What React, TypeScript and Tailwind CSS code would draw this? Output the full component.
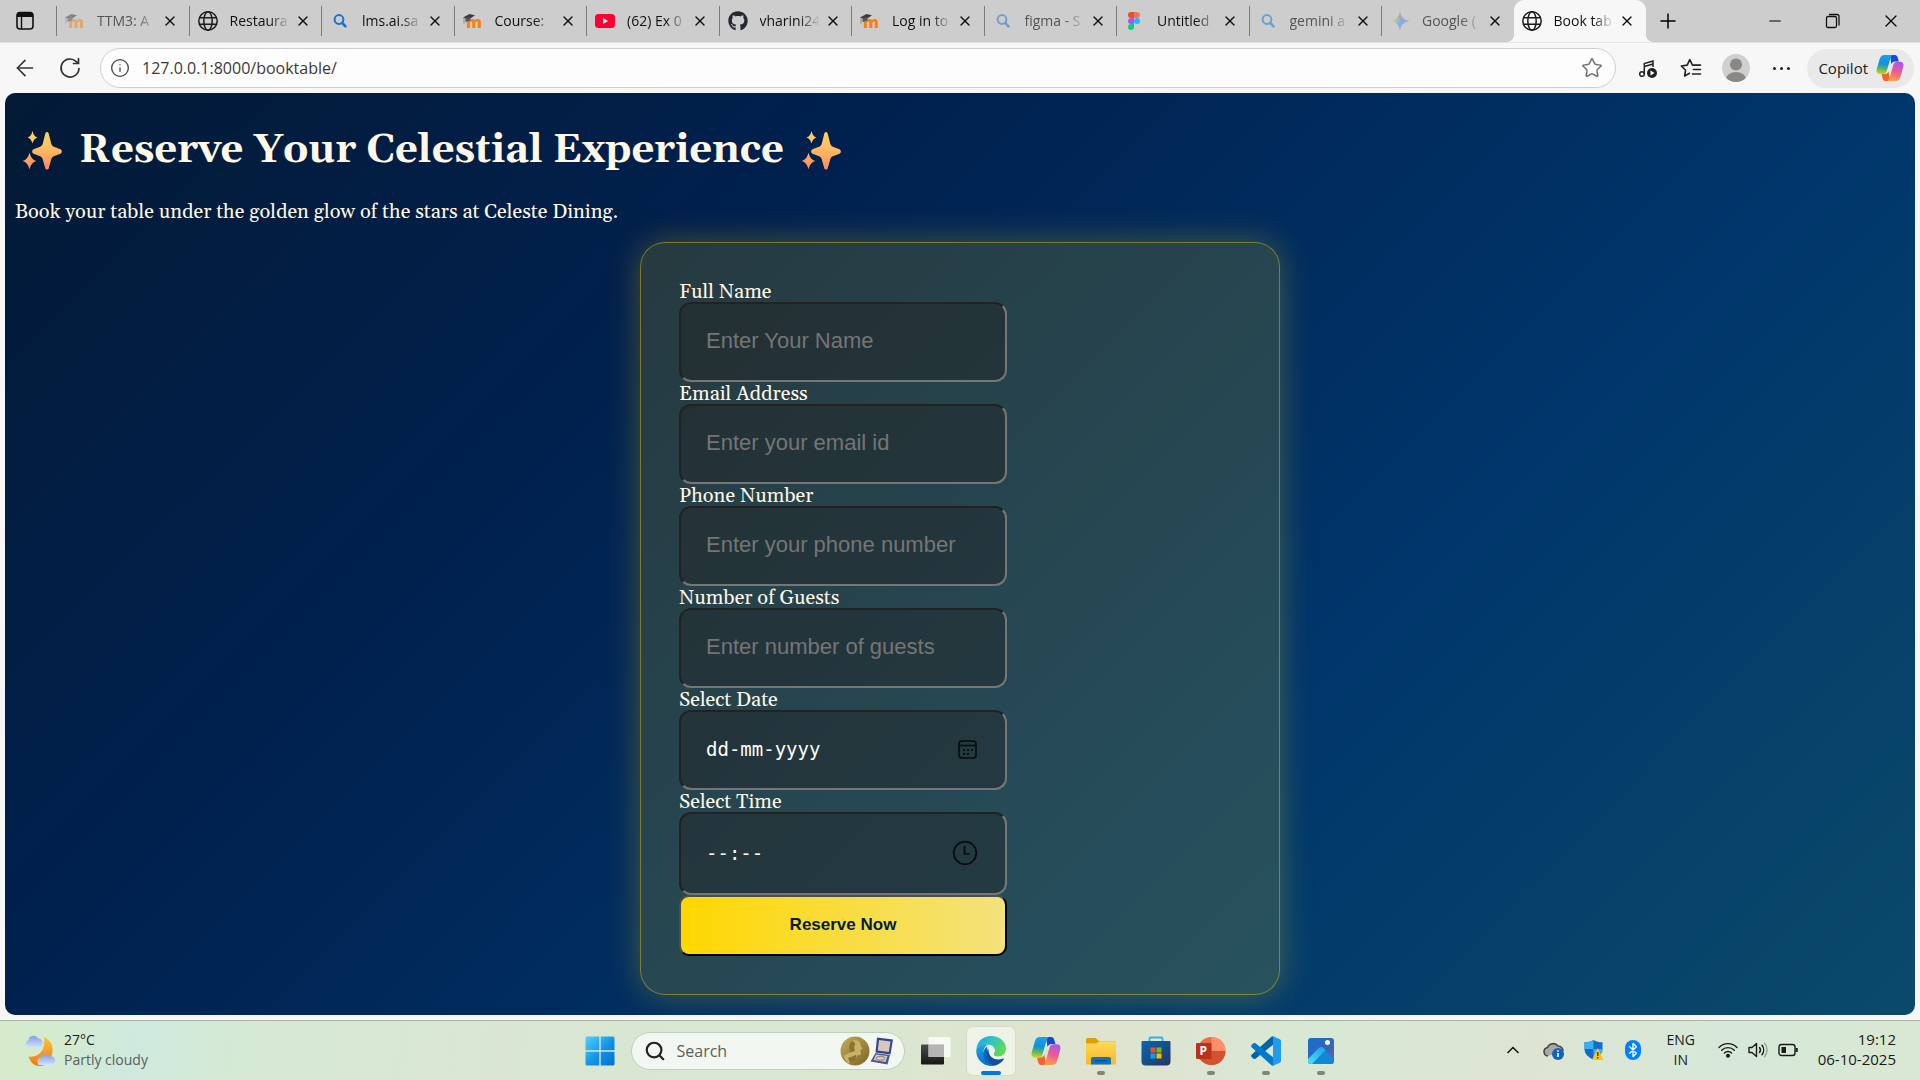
import React from "react";
import { ArrowLeft, Info, Star, X, Minus, Plus, Search, ChevronUp, Bluetooth } from "lucide-react";
import { FaGithub } from "react-icons/fa";

type IconProps = { className?: string };

const TabActions = () => (
  <svg viewBox="0 0 20 20" className="size-5">
    <rect x="2" y="1.5" width="16" height="16.5" rx="3" fill="none" stroke="#111" strokeWidth="1.6" />
    <path d="M2 6V4.5a3 3 0 0 1 3-3h10a3 3 0 0 1 3 3V6z" fill="#111" />
    <path d="M6.5 6v12" stroke="#111" strokeWidth="1.4" />
  </svg>
);

const Globe = ({ className }: IconProps) => (
  <svg viewBox="0 0 20 20" className={className} fill="none" stroke="#1b1b1b" strokeWidth="1.5">
    <circle cx="10" cy="10" r="9.2" />
    <ellipse cx="10" cy="10" rx="4.2" ry="9.2" />
    <path d="M1.6 6.8h16.8M1.6 13.2h16.8" />
  </svg>
);

const Moodle = ({ className }: IconProps) => (
  <svg viewBox="0 0 20 20" className={className}>
    <text x="3" y="16.500" fontFamily="Open Sans, sans-serif" fontWeight="800" fontSize="16" fill="#f98012">m</text>
    <path d="M0 6.4 6.5 3 12 4.2 6 8.5z" fill="#3c3c3c" />
    <path d="M2.5 7v4l5-1.6V6z" fill="#555" />
    <path d="M1 6.6v6" stroke="#777" strokeWidth=".8" />
  </svg>
);

const BlueSearch = ({ className }: IconProps) => (
  <svg viewBox="0 0 20 20" className={className} fill="none" stroke="#1573d1" strokeLinecap="round">
    <circle cx="9" cy="8.5" r="4.4" strokeWidth="2" />
    <path d="m12.3 12 3.2 3.4" strokeWidth="2.6" />
  </svg>
);

const YouTube = ({ className }: IconProps) => (
  <svg viewBox="0 0 20 20" className={className}>
    <rect x="0" y="3" width="20" height="14" rx="3.5" fill="#ff0033" />
    <path d="m8 7 5 3-5 3z" fill="#fff" />
  </svg>
);

const Figma = ({ className }: IconProps) => (
  <svg viewBox="0 0 20 20" className={className}>
    <path d="M9 1H6a3 3 0 0 0 0 6h3z" fill="#f24e1e" />
    <path d="M9 1h3a3 3 0 0 1 0 6H9z" fill="#ff7262" />
    <path d="M9 7H6a3 3 0 0 0 0 6h3z" fill="#a259ff" />
    <circle cx="12" cy="10" r="3" fill="#1abcfe" />
    <path d="M9 13H6a3 3 0 1 0 3 3z" fill="#0acf83" />
  </svg>
);

const Gemini = ({ className }: IconProps) => (
  <svg viewBox="0 0 20 20" className={className}>
    <defs>
      <linearGradient id="gem" x1="0" y1=".2" x2="1" y2=".6">
        <stop offset="0" stopColor="#f6c445" />
        <stop offset=".35" stopColor="#8fbf9a" />
        <stop offset=".55" stopColor="#4f8df5" />
        <stop offset="1" stopColor="#4080f0" />
      </linearGradient>
      <linearGradient id="gemTop" x1="0" y1="0" x2="0" y2="1">
        <stop offset="0" stopColor="#ea4335" />
        <stop offset=".45" stopColor="#ea4335" stopOpacity="0" />
        <stop offset=".7" stopColor="#34a853" stopOpacity="0" />
        <stop offset="1" stopColor="#34a853" />
      </linearGradient>
    </defs>
    <path d="M10 .5c.8 5.4 4 8.700 9.500 9.500-5.500.8-8.700 4-9.500 9.500C9.200 14 6 10.800.5 10 6 9.200 9.200 5.900 10 .5z" fill="url(#gem)" />
    <path d="M10 .5c.8 5.4 4 8.700 9.500 9.500-5.500.8-8.700 4-9.500 9.500C9.200 14 6 10.800.5 10 6 9.200 9.200 5.900 10 .5z" fill="url(#gemTop)" />
  </svg>
);

const GitHub = ({ className }: IconProps) => <FaGithub className={className} color="#24292f" />;

const Copilot = ({ id, className }: { id: string; className?: string }) => (
  <svg viewBox="0 0 30 30" className={className}>
    <defs>
      <linearGradient id={`${id}a`} x1=".3" y1="0" x2=".2" y2="1">
        <stop offset="0" stopColor="#1a9fee" />
        <stop offset=".45" stopColor="#1390d8" />
        <stop offset=".7" stopColor="#4fb86a" />
        <stop offset="1" stopColor="#f0d00c" />
      </linearGradient>
      <linearGradient id={`${id}b`} x1=".7" y1="0" x2=".4" y2="1">
        <stop offset="0" stopColor="#a856ec" />
        <stop offset=".5" stopColor="#ee5a92" />
        <stop offset="1" stopColor="#fba04a" />
      </linearGradient>
    </defs>
    <path d="M15 1h5c2 0 2.700 1.200 3.200 2.800L24.500 8h-4c-2 0-3.300 1-4 3z" fill="#1b48cf" />
    <path d="M15 29h-5c-1.600 0-2.300-1.200-2.800-2.800L6 21.500h3c2.600 0 3.700-1 4.400-3z" fill="#f5622e" />
    <path d="M9 1h9c-1.500.6-2 2-2.600 4l-4 13.500c-.7 2.200-2 3.200-4.400 3.200H4.500C1 21.700-.1 19 .8 16L4 5c.8-2.600 2.400-4 5-4z" fill={`url(#${id}a)`} />
    <path d="M21 29h-9c1.500-.6 2-2 2.600-4l4-13.500c.7-2.200 2-3.200 4.400-3.200h2.500c3.500 0 4.600 2.700 3.700 5.700L26 25c-.8 2.600-2.400 4-5 4z" fill={`url(#${id}b)`} />
  </svg>
);

const Sparkles = () => (
  <svg viewBox="0 0 40 42" className="h-[42px] w-10 shrink-0" role="img" aria-label="sparkles">
    <defs>
      <linearGradient id="spark" gradientUnits="userSpaceOnUse" x1="0" y1="0" x2="0" y2="42">
        <stop offset="0" stopColor="#ffd45e" />
        <stop offset=".4" stopColor="#ffc061" />
        <stop offset="1" stopColor="#ff8266" />
      </linearGradient>
    </defs>
    <g fill="url(#spark)">
      <path d="M25 2c1 0 1.500.8 1.800 2l2.400 9.500c.5 2 1.500 3 3.300 3.600l6 2.200c1.800.8 1.800 3.600 0 4.400l-6 2.200c-1.800.6-2.800 1.600-3.300 3.600L26.800 38c-.5 2-3.100 2-3.600 0l-2.400-8.500c-.5-2-1.500-3-3.300-3.600l-6-2.200c-1.800-.8-1.800-3.600 0-4.400l6-2.200c1.800-.6 2.800-1.600 3.300-3.600L23.200 4c.3-1.200.8-2 1.800-2z" />
      <path d="M10.500 1c.7 2.800 1.700 5.400 5 6.500-3.300 1.100-4.300 3.700-5 6-.7-2.300-1.700-4.900-5-6 3.300-1.100 4.300-3.700 5-6.500z" />
      <path d="M7.500 22.500c1 4 2.500 7.200 7 8.500-4.500 1.300-6 4.500-7 8.500-1-4-2.500-7.200-7-8.500 4.500-1.300 6-4.500 7-8.500z" />
    </g>
  </svg>
);

const tabs = [
  { title: "TTM3: A", Icon: Moodle, faded: true },
  { title: "Restaura", Icon: Globe },
  { title: "lms.ai.sa", Icon: BlueSearch },
  { title: "Course:", Icon: Moodle },
  { title: "(62) Ex 0", Icon: YouTube },
  { title: "vharini24", Icon: GitHub },
  { title: "Log in to", Icon: Moodle },
  { title: "figma - S", Icon: BlueSearch, faded: true },
  { title: "Untitled", Icon: Figma },
  { title: "gemini a", Icon: BlueSearch, faded: true },
  { title: "Google (", Icon: Gemini, faded: true },
  { title: "Book tab", Icon: Globe, active: true },
];

function TabStrip() {
  return (
    <header className="flex h-[42px] items-center bg-[#cdcdcd]">
      <button aria-label="Tab actions" className="flex w-14 shrink-0 justify-center pr-1.5">
        <TabActions />
      </button>
      <nav className="grid h-full flex-1 grid-cols-12">
        {tabs.map(({ title, Icon, faded, active }, i) => (
          <div
            key={i}
            className={
              active
                ? "relative flex h-full min-w-0 items-center rounded-t-[10px] bg-[#f7f7f7] pl-2"
                : "flex h-full min-w-0 items-center"
            }
          >
            {active ? (
              <>
                <span className="absolute -left-2 bottom-0 size-2 bg-[radial-gradient(circle_at_0_0,transparent_8px,#f7f7f7_8px)]" />
                <span className="absolute -right-2 bottom-0 size-2 bg-[radial-gradient(circle_at_100%_0,transparent_8px,#f7f7f7_8px)]" />
              </>
            ) : (
              <span className="mr-2 h-[30px] w-px shrink-0 bg-[#7b7b7b]" />
            )}
            <Icon className={faded ? "size-5 shrink-0 opacity-50" : "size-5 shrink-0"} />
            <span
              className={
                (faded ? "text-[#555]" : "text-[#111]") +
                " ml-3 w-[60px] whitespace-nowrap pb-0.5 text-[14px] [mask-image:linear-gradient(to_right,#000_65%,transparent)]"
              }
            >
              {title}
            </span>
            <button aria-label={`Close ${title}`} className="ml-[5px] flex size-4 items-center justify-center">
              <X className="size-4 shrink-0 text-[#111]" strokeWidth={2} />
            </button>
          </div>
        ))}
      </nav>
      <div className="flex w-[274px] shrink-0 items-center">
        <button aria-label="New tab" className="ml-2.5"><Plus className="size-6" strokeWidth={1.5} /></button>
        <button aria-label="Minimize" className="ml-[86px]"><Minus className="size-[18px]" strokeWidth={1.5} /></button>
        <button aria-label="Restore" className="ml-10">
          <svg viewBox="0 0 18 18" className="size-[18px]" fill="none" stroke="#111" strokeWidth="1.300">
            <rect x="2.500" y="4.500" width="10" height="11" rx="1.500" />
            <path d="M5 2.500h8a2 2 0 0 1 2 2v9" />
          </svg>
        </button>
        <button aria-label="Close window" className="ml-[39px]"><X className="size-5" strokeWidth={1.5} /></button>
      </div>
    </header>
  );
}

function Toolbar() {
  return (
    <div className="flex h-[51px] items-center border-t border-[#e4e4e4] bg-[#f7f7f7]">
      <button aria-label="Back" className="ml-3"><ArrowLeft className="size-[26px] text-[#333]" strokeWidth={1.5} /></button>
      <button aria-label="Refresh" className="ml-5">
        <svg viewBox="0 0 24 24" className="size-6" fill="none" stroke="#333" strokeWidth="1.700" strokeLinecap="round">
          <path d="M21 12.500a9 9 0 1 1-3-7.200L20 7" />
          <path d="M20.500 2.500v5h-5" />
        </svg>
      </button>
      <label className="ml-[18px] flex h-10 flex-1 items-center rounded-full border border-[#cfcfcf] bg-[#fdfdfd] pl-[9px] pr-3">
        <Info className="size-5 text-[#444]" strokeWidth={1.6} />
        <input
          aria-label="Address"
          defaultValue="127.0.0.1:8000/booktable/"
          className="ml-3 min-w-0 flex-1 bg-transparent text-[16px] text-[#3a3a3a] outline-none"
        />
        <Star className="size-[22px] text-[#707070]" strokeWidth={1.6} />
      </label>
      <button aria-label="Media" className="ml-[19px]">
        <svg viewBox="0 0 24 24" className="size-6" fill="none" stroke="#222" strokeWidth="1.500">
          <circle cx="7" cy="18" r="2.300" />
          <path d="M9.300 18V7.500L18 5v6M9.300 10.500 18 8" />
          <circle cx="17" cy="17" r="5" fill="#222" stroke="none" />
          <path d="m15.500 14.500 4 2.500-4 2.500z" fill="#fff" stroke="none" />
        </svg>
      </button>
      <button aria-label="Favorites" className="ml-5">
        <svg viewBox="0 0 24 24" className="size-6" fill="none" stroke="#222" strokeWidth="1.600" strokeLinejoin="round" strokeLinecap="round">
          <path d="M10.500 17.300 5.600 20l1-5.800L2.300 10l5.900-.9L10.800 3.600l2.700 5.500h8" />
          <path d="M14.500 13.500h7M13.500 18h8" />
        </svg>
      </button>
      <button aria-label="Profile" className="ml-[19px]">
        <svg viewBox="0 0 28 28" className="size-7">
          <clipPath id="avatar"><circle cx="14" cy="14" r="14" /></clipPath>
          <g clipPath="url(#avatar)">
            <rect width="28" height="28" fill="#d2d0ce" />
            <circle cx="14" cy="10.500" r="6" fill="#8a8886" />
            <ellipse cx="14" cy="25" rx="10" ry="7" fill="#8a8886" />
          </g>
        </svg>
      </button>
      <button aria-label="Settings and more" className="ml-[19px] flex w-6 justify-center gap-1">
        <span className="size-[3px] rounded-full bg-[#222]" />
        <span className="size-[3px] rounded-full bg-[#222]" />
        <span className="size-[3px] rounded-full bg-[#222]" />
      </button>
      <button className="ml-3.5 mr-1.5 flex h-[39px] items-center gap-2 rounded-full bg-[#e9e9e9] pl-[11px] pr-2.5 text-[15px] text-[#222]">
        Copilot
        <Copilot id="cpTop" className="size-7" />
      </button>
    </div>
  );
}

const fields = [
  { id: "name", label: "Full Name", placeholder: "Enter Your Name" },
  { id: "email", label: "Email Address", placeholder: "Enter your email id" },
  { id: "phone", label: "Phone Number", placeholder: "Enter your phone number" },
  { id: "guests", label: "Number of Guests", placeholder: "Enter number of guests" },
];

const boxClass =
  "block w-full rounded-xl border-2 border-t-[#222] border-l-[#222] border-r-[#767676] border-b-[#767676] bg-[rgba(32,32,32,0.4)] px-[25px] pb-0.5 outline-none";
const labelClass = "block h-[22px] text-[20px] leading-6";

function BookingPage() {
  return (
    <main className="mx-[5px] mb-[5px] flex flex-1 flex-col overflow-hidden rounded-[10px] bg-[linear-gradient(135deg,#041a36,#00204d_30%,#00366c_67%,#0b4a69)] px-2.5 font-[Gelasio,Georgia,'DejaVu_Serif',serif] text-[#fff8e7]">
      <h1 className="mt-[30px] flex h-14 items-center gap-[17px] pl-[7px] text-[40px] font-bold">
        <Sparkles />
        Reserve Your Celestial Experience
        <Sparkles />
      </h1>
      <p className="mt-5 h-6 text-[20px] leading-[26px]">Book your table under the golden glow of the stars at Celeste Dining.</p>
      <form
        onSubmit={(e) => e.preventDefault()}
        className="mx-auto mt-[19px] w-[640px] rounded-[25px] border border-[rgba(255,215,0,0.4)] bg-[rgba(255,215,0,0.15)] px-[38px] pb-[38px] pt-[37px] shadow-[0_0_32px_rgba(255,215,0,0.28)]"
      >
        <div className="w-[328px]">
          {fields.map((f) => (
            <React.Fragment key={f.id}>
              <label htmlFor={f.id} className={labelClass}>{f.label}</label>
              <input
                id={f.id}
                placeholder={f.placeholder}
                className={boxClass + " h-20 font-['Liberation_Sans',sans-serif] text-[22px] placeholder:text-[#757575]"}
              />
            </React.Fragment>
          ))}
          <label htmlFor="date" className={labelClass}>Select Date</label>
          <div className="relative">
            <input
              id="date"
              placeholder="dd-mm-yyyy"
              className={boxClass + " h-20 font-['DejaVu_Sans_Mono',monospace] text-[19px] placeholder:text-white"}
            />
            <button type="button" aria-label="Choose date" className="absolute right-[29px] top-[30px]">
              <svg viewBox="0 0 20 20" className="size-5" fill="none" stroke="#0a0a0a" strokeWidth="1.600">
                <rect x="1" y="1" width="17" height="17" rx="3" />
                <path d="M1 5.500h17" />
                <path d="M5 10h2M9 10h2M13 10h2M5 14h2M9 14h2" strokeWidth="2" />
              </svg>
            </button>
          </div>
          <label htmlFor="time" className={labelClass}>Select Time</label>
          <div className="relative">
            <input
              id="time"
              placeholder="--:--"
              className={boxClass + " h-[83px] font-['DejaVu_Sans_Mono',monospace] text-[19px] placeholder:text-white"}
            />
            <button type="button" aria-label="Choose time" className="absolute right-[29px] top-7">
              <svg viewBox="0 0 26 26" className="size-[26px]" fill="none" stroke="#0a0a0a" strokeWidth="1.700">
                <circle cx="13" cy="13" r="11.300" />
                <path d="M12.500 6v8h5" />
              </svg>
            </button>
          </div>
          <button
            type="submit"
            className="block h-[61px] w-full rounded-[10px] border-2 border-b-black border-l-[#4d4d4d] border-r-black border-t-[#4d4d4d] bg-[linear-gradient(90deg,#ffd700,#f3e27d)] pb-0.5 font-['Liberation_Sans',sans-serif] text-[17px] font-bold text-[#001f3f]"
          >
            Reserve Now
          </button>
        </div>
      </form>
    </main>
  );
}

const TaskTile = ({ label, children, mark }: { label: string; children: React.ReactNode; mark?: "active" | "open" }) => (
  <button
    aria-label={label}
    className={
      mark === "active"
        ? "flex size-12 flex-col items-center rounded-md bg-white/50 pt-[9px] shadow-[0_0_1px_1px_rgba(0,0,0,0.04)]"
        : "flex size-12 flex-col items-center pt-[9px]"
    }
  >
    {children}
    {mark === "active" && <span className="mt-[5px] h-1 w-5 rounded-full bg-[#0078d4]" />}
    {mark === "open" && <span className="mt-[5px] h-1 w-2 rounded-full bg-[#7f8579]" />}
  </button>
);

const icon30 = "size-[30px] shrink-0";

function TaskBar() {
  return (
    <footer className="grid h-[60px] grid-cols-[1fr_auto_1fr] items-center border-t border-[#a9b3a4] bg-[linear-gradient(100deg,#d6ebcb_0%,#d5ebcf_3%,#ceeadf_7%,#d5e9d3_13%,#dae6d2_26%,#d8e8d2_40%,#dfe3cf_57%,#d8e8d4_68%,#dde5d2_80%,#d6e8da_90%,#d9e8d2_100%)] text-[#1a1a1a]">
      <div className="flex items-center gap-2 pb-0.5 pl-6">
        <svg viewBox="0 0 32 34" className="h-[34px] w-8">
          <defs>
            <linearGradient id="moon" x1="0" y1="0" x2="0" y2="1"><stop offset="0" stopColor="#f8c23c" /><stop offset="1" stopColor="#f07a18" /></linearGradient>
            <linearGradient id="cloud" x1="0" y1="0" x2="0" y2="1"><stop offset="0" stopColor="#7f9fe6" /><stop offset="1" stopColor="#d5e2fb" /></linearGradient>
          </defs>
          <path d="M20 4c6 3 9.500 8 8.500 15-.9 8-6 14-12.500 14-5.500 0-9.500-3-11.500-9.500C15 25 22 17 20 4z" fill="url(#moon)" />
          <path d="M4.500 14.500a4 4 0 0 1 0-7.500 5.200 5.200 0 0 1 9.500-1.800 4.800 4.800 0 0 1 1.500 9.300z" fill="url(#cloud)" />
          <path d="M17 32a3.600 3.600 0 0 1 0-7.200 4.600 4.600 0 0 1 8.500-1.300A4.300 4.300 0 0 1 28 32z" fill="url(#cloud)" />
        </svg>
        <div className="text-[14px] leading-5">
          <p>27°C</p>
          <p className="text-[#59605a]">Partly cloudy</p>
        </div>
      </div>

      <div className="flex items-center gap-[7px]">
        <TaskTile label="Start">
          <svg viewBox="0 0 30 30" className={icon30}>
            <defs><linearGradient id="win" x1="0" y1="0" x2="1" y2="1"><stop offset="0" stopColor="#4fd2ff" /><stop offset=".55" stopColor="#1292e4" /><stop offset="1" stopColor="#0072d0" /></linearGradient></defs>
            <path d="M2 .5h12.300v13.800H.500V2A1.500 1.500 0 0 1 2 .5zM15.700.5H28A1.500 1.500 0 0 1 29.500 2v12.300H15.700zM.500 15.700h13.800v13.800H2A1.500 1.500 0 0 1 .500 28zM15.700 15.700h13.800V28a1.500 1.500 0 0 1-1.500 1.500H15.700z" fill="url(#win)" />
          </svg>
        </TaskTile>
        <label className="flex h-[38px] w-[274px] items-center rounded-full border border-[#c3cfbe] bg-[#f3f7f1] pl-3 pr-2.5">
          <Search className="size-[22px] text-[#222]" strokeWidth={2.4} />
          <input aria-label="Search" placeholder="Search" className="ml-[11px] w-0 flex-1 bg-transparent text-[16px] outline-none placeholder:text-[#5a5f5a]" />
          <svg viewBox="0 0 54 30" className="h-[30px] w-[54px]">
            <defs><linearGradient id="medal" x1="0" y1="0" x2="1" y2="1"><stop offset="0" stopColor="#c4ab5c" /><stop offset="1" stopColor="#7c6426" /></linearGradient></defs>
            <circle cx="15" cy="15" r="14.500" fill="url(#medal)" />
            <path d="M12 5c5-2 8 0 8.500 4l2 4-2 1 .3 4c-1 2-3 1-4 1.500L17 24l-9 3.500c-2-2-4-5-4-8l6-3c-1-4-1.500-9 2-11.500z" fill="#c9b268" />
            <path d="M12 5c3 1 4 3 2 6l1 4-5 1.500C8.500 12 9 7 12 5zM8 22l8-3 1 5-7 3z" fill="#8b7330" />
            <path d="m37 1.500 16 2-2.500 15-15-2z" fill="#35458a" />
            <path d="m39 4 11.500 1.500-1.700 10.500-11-1.500z" fill="#d9c8bd" />
            <path d="m35.500 17 14.500 2-2.500 9.500-17-3z" fill="#4a5797" />
            <path d="m36 18.500 11.500 1.500-2 6-12-2z" fill="#d6c9c2" />
            <ellipse cx="40.500" cy="22.300" rx="4.500" ry="2" fill="none" stroke="#8d7d78" />
          </svg>
        </label>
        <TaskTile label="Task view">
          <svg viewBox="0 0 30 30" className={icon30}>
            <defs><linearGradient id="tv" x1="0" y1="0" x2="0" y2="1"><stop offset="0" stopColor="#4a4a4a" /><stop offset="1" stopColor="#171717" /></linearGradient></defs>
            <rect x="0" y="8.500" width="23" height="20" rx="1" fill="url(#tv)" />
            <rect x="7.500" y="1" width="22" height="20" rx="1" fill="#fff" fillOpacity=".78" />
            <rect x="7.500" y="8.500" width="15.500" height="12.500" fill="#b5b5b5" />
          </svg>
        </TaskTile>
        <TaskTile label="Microsoft Edge" mark="active">
          <svg viewBox="0 0 30 30" className={icon30}>
            <defs>
              <linearGradient id="edgeTop" x1="0" y1="0" x2="1" y2=".5"><stop offset="0" stopColor="#1f9fe0" /><stop offset=".5" stopColor="#32c2c9" /><stop offset="1" stopColor="#5fdc52" /></linearGradient>
              <linearGradient id="edgeLeft" x1="0" y1="0" x2="0" y2="1"><stop offset="0" stopColor="#1ea1e2" /><stop offset="1" stopColor="#0a6fd0" /></linearGradient>
            </defs>
            <path d="M.3 13C1.300 5 7.500 0 15 0c9 0 15 6 15 12.500 0 5-3.500 8-7.500 8-3 0-4.700-1-4.700-2.300 0-1 1.200-1.500 1.200-3.700 0-3-3-5.800-7-5.800C7 8.700 2 11 .3 13z" fill="url(#edgeTop)" />
            <path d="M.2 14c1.300-3.500 6-5.300 11.800-5.300-2.500 1-4.500 3.300-4.500 8.300 0 7 5 12 10 12.700-9 1.500-17.500-5-17.300-15.700z" fill="url(#edgeLeft)" />
            <path d="M12.500 12.500C7.500 19 12 28.700 18 29.700c4-.7 7.500-3 9.700-6.200.4-.7-.2-1.200-.9-.9-5.800 2.500-14.800.2-14.300-10.100z" fill="#124f96" />
            <path d="M11 10.500c-5.500 4-4.500 12-1 16 2 2 4.500 3.200 8 3.200-5-2.200-8-8-6.500-14z" fill="#0d67b8" />
          </svg>
        </TaskTile>
        <TaskTile label="Copilot"><Copilot id="cpBar" className={icon30} /></TaskTile>
        <TaskTile label="File Explorer" mark="open">
          <svg viewBox="0 0 30 30" className={icon30}>
            <defs><linearGradient id="fold" x1="0" y1="0" x2="0" y2="1"><stop offset="0" stopColor="#ffd95f" /><stop offset="1" stopColor="#f8b91e" /></linearGradient></defs>
            <path d="M0 3.500A1.500 1.500 0 0 1 1.500 2h8l3.500 3h15a1.500 1.500 0 0 1 1.500 1.500V12H0z" fill="#dfa007" />
            <path d="M0 7.500h10.500l2.500-2.300h17V27a1.500 1.500 0 0 1-1.500 1.500h-27A1.500 1.500 0 0 1 0 27z" fill="url(#fold)" />
            <path d="M5 28.500V23a2 2 0 0 1 2-2h16a2 2 0 0 1 2 2v5.500z" fill="#0f72c4" />
            <path d="M9 24.800h12" stroke="#0b4f91" strokeWidth="1.300" />
          </svg>
        </TaskTile>
        <TaskTile label="Microsoft Store">
          <svg viewBox="0 0 30 30" className={icon30}>
            <defs><linearGradient id="store" x1="0" y1="0" x2="1" y2="1"><stop offset="0" stopColor="#0667b5" /><stop offset="1" stopColor="#293461" /></linearGradient></defs>
            <path d="M8.500 6V2.500a1 1 0 0 1 1-1h11a1 1 0 0 1 1 1V6" fill="none" stroke="#27b4ee" strokeWidth="1.800" />
            <path d="M.500 6A1 1 0 0 1 1.500 5h27a1 1 0 0 1 1 1v19.500a4 4 0 0 1-4 4h-21a4 4 0 0 1-4-4z" fill="url(#store)" />
            <path d="M9.500 11.500h5v5h-5z" fill="#f25022" /><path d="M15.500 11.500h5v5h-5z" fill="#7fba00" />
            <path d="M9.500 17.500h5v5h-5z" fill="#00a4ef" /><path d="M15.500 17.500h5v5h-5z" fill="#ffb900" />
          </svg>
        </TaskTile>
        <TaskTile label="PowerPoint" mark="open">
          <svg viewBox="0 0 30 30" className={icon30}>
            <circle cx="15.500" cy="15" r="14" fill="#ed6c47" />
            <path d="M15.500 1a14 14 0 0 1 14 14h-14z" fill="#ff8f6b" />
            <path d="M1.500 15h28a14 14 0 0 1-28 0z" fill="#d35230" />
            <rect x="0" y="7" width="15.500" height="16" rx="1.300" fill="#b9331a" />
            <text x="3.500" y="19" fontFamily="Open Sans, sans-serif" fontWeight="700" fontSize="12" fill="#fff">P</text>
          </svg>
        </TaskTile>
        <TaskTile label="Visual Studio Code" mark="open">
          <svg viewBox="0 0 30 30" className={icon30}>
            <path d="M22 .3v8.500L4.500 22.700c-.8.6-1.400.5-2 0L.6 21c-.7-.7-.7-1.500 0-2.200L20.200.9c.5-.5 1-.7 1.800-.6z" fill="#0065a9" />
            <path d="M22 29.700v-8.500L4.500 7.300c-.8-.6-1.400-.5-2 0L.6 9c-.7.7-.7 1.500 0 2.200l19.600 17.900c.5.500 1 .7 1.800.6z" fill="#007acc" />
            <path d="M21 .4c.6-.3 1.200-.3 1.800 0l6 2.900c.8.400 1.200 1 1.200 1.900v19.600c0 .9-.4 1.500-1.200 1.900l-6 2.900c-.6.3-1.200.3-1.800 0 .6.100 1-.4 1-1.200V1.600c0-.8-.4-1.300-1-1.200z" fill="#1f9cf0" />
          </svg>
        </TaskTile>
        <TaskTile label="Photos" mark="open">
          <svg viewBox="0 0 30 30" className={icon30}>
            <defs>
              <linearGradient id="ph" x1="0" y1="0" x2="1" y2="1"><stop offset="0" stopColor="#1171cf" /><stop offset=".6" stopColor="#3b62b5" /><stop offset="1" stopColor="#8957a8" /></linearGradient>
              <linearGradient id="ph2" x1="0" y1="1" x2="1" y2="0"><stop offset="0" stopColor="#4be0fb" /><stop offset="1" stopColor="#1ba2e6" /></linearGradient>
              <clipPath id="phc"><rect x="2" y="2" width="26" height="26" rx="3" /></clipPath>
            </defs>
            <g clipPath="url(#phc)">
              <rect x="2" y="2" width="26" height="26" fill="url(#ph)" />
              <path d="M2 23 13 12c1.500-1.500 3-1.500 4.500 0L28 22.500V28H2z" fill="#1287d6" />
              <path d="M2 23 13 12c1.500-1.500 3-1.500 4.500 0l2 2L6 28H2z" fill="url(#ph2)" />
            </g>
            <circle cx="21.500" cy="6.500" r="2.500" fill="#f4f6ff" />
          </svg>
        </TaskTile>
      </div>

      <div className="flex items-center justify-end pb-0.5 pr-6 text-[15px] leading-5">
        <button aria-label="Hidden icons"><ChevronUp className="size-5" strokeWidth={2} /></button>
        <svg viewBox="0 0 22 20" className="ml-5 h-5 w-[22px]">
          <path d="M5 16a4.300 4.300 0 0 1-.5-8.500C6 3.500 12 2 15 6c3 0 5 2.500 5 5" fill="#a9a9a9" stroke="#444" strokeWidth="1.500" />
          <circle cx="15" cy="14" r="6" fill="#0f65bd" />
          <path d="M15 13v4M15 10.300v1.400" stroke="#fff" strokeWidth="1.600" />
        </svg>
        <svg viewBox="0 0 20 20" className="ml-[19px] size-5">
          <path d="M9.500 0c2.500 1.700 5.500 2.300 9 2.300V9c0 5-4 8.500-9 10.500C4.500 17.500.5 14 .5 9V2.300c3.500 0 6.500-.6 9-2.300z" fill="#0f6cc8" />
          <path d="M9.500 0v9H.5V2.300c3.500 0 6.500-.6 9-2.300zM9.500 9h9c0 5-4 8.500-9 10.500z" fill="#38b0ee" />
          <path d="m13.800 8 5.700 12H8z" fill="#ffc414" />
          <path d="M13.800 12v4M13.800 17v1.500" stroke="#222" strokeWidth="1.300" />
        </svg>
        <span className="ml-[21px] flex h-5 w-4 items-center justify-center rounded-lg bg-[#0082fc]">
          <Bluetooth className="size-4 text-white" strokeWidth={2} />
        </span>
        <div className="ml-[25px] w-[30px] text-center text-[14px]">
          <p>ENG</p>
          <p>IN</p>
        </div>
        <svg viewBox="0 0 20 16" className="ml-[22px] h-4 w-5" fill="none" stroke="#1a1a1a" strokeWidth="1.400" strokeLinecap="round">
          <path d="M1 5.500a12.500 12.500 0 0 1 18 0M3.700 8.300a8.800 8.800 0 0 1 12.600 0M6.400 11a5 5 0 0 1 7.200 0" />
          <circle cx="10" cy="13.700" r="1.300" fill="#1a1a1a" />
        </svg>
        <svg viewBox="0 0 20 16" className="ml-2.5 h-4 w-5" fill="none" stroke="#1a1a1a" strokeWidth="1.400" strokeLinejoin="round" strokeLinecap="round">
          <path d="M1 5.500h3L8.500 1.500v13L4 10.500H1z" />
          <path d="M11.500 5.500a4 4 0 0 1 0 5M14 3.300a7.500 7.500 0 0 1 0 9.400" />
          <path d="M16.500 1.200a10.500 10.500 0 0 1 0 13.600" stroke="#9aa39a" />
        </svg>
        <svg viewBox="0 0 20 16" className="ml-2.5 h-4 w-5" fill="none" stroke="#1a1a1a" strokeWidth="1.400">
          <rect x="1" y="2.500" width="16" height="11" rx="2.500" />
          <rect x="3.500" y="5" width="4.500" height="6" fill="#1a1a1a" stroke="none" />
          <path d="M18.700 6v4" strokeWidth="2" />
        </svg>
        <div className="ml-5 pb-0.5 text-right">
          <p>19:12</p>
          <p>06-10-2025</p>
        </div>
      </div>
    </footer>
  );
}

export default function App() {
  return (
    <div className="flex min-h-screen flex-col bg-[#f7f7f7] font-['Open_Sans','Noto_Sans',sans-serif]">
      <TabStrip />
      <Toolbar />
      <BookingPage />
      <TaskBar />
    </div>
  );
}
